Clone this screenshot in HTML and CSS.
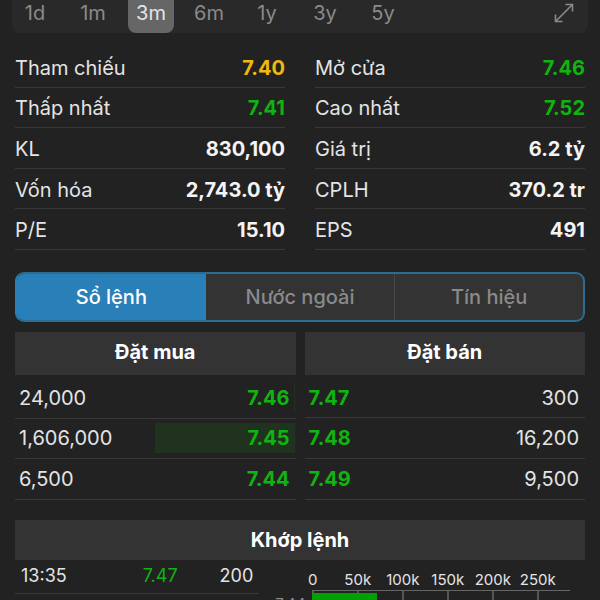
FILE: index.html
```html
<!DOCTYPE html>
<html lang="vi">
<head>
    <meta charset="UTF-8">
    <meta name="viewport" content="width=device-width, initial-scale=1.0">
    <title>Sổ lệnh</title>
    <link rel="stylesheet" href="styles.css">
</head>
<body>
    <nav class="range-bar">
        <button class="range">1d</button>
        <button class="range">1m</button>
        <button class="range active">3m</button>
        <button class="range">6m</button>
        <button class="range">1y</button>
        <button class="range">3y</button>
        <button class="range">5y</button>
        <button class="expand" aria-label="Toàn màn hình">
            <svg width="20" height="20" viewBox="0 0 20 20" fill="none" stroke="currentColor" stroke-width="1.6">
                <path d="M1.5 18.5L18.5 1.5M11.5 1.5h7v7M1.5 11.5v7h7"/>
            </svg>
        </button>
    </nav>

    <main>
        <div class="stats">
            <dl class="stat-list">
                <div class="stat"><dt>Tham chiếu</dt><dd class="yellow">7.40</dd></div>
                <div class="stat"><dt>Thấp nhất</dt><dd class="green">7.41</dd></div>
                <div class="stat"><dt>KL</dt><dd>830,100</dd></div>
                <div class="stat"><dt>Vốn hóa</dt><dd>2,743.0 tỷ</dd></div>
                <div class="stat"><dt>P/E</dt><dd>15.10</dd></div>
            </dl>
            <dl class="stat-list">
                <div class="stat"><dt>Mở cửa</dt><dd class="green">7.46</dd></div>
                <div class="stat"><dt>Cao nhất</dt><dd class="green">7.52</dd></div>
                <div class="stat"><dt>Giá trị</dt><dd>6.2 tỷ</dd></div>
                <div class="stat"><dt>CPLH</dt><dd>370.2 tr</dd></div>
                <div class="stat"><dt>EPS</dt><dd>491</dd></div>
            </dl>
        </div>

        <div class="tabs">
            <button class="tab active">Sổ lệnh</button>
            <button class="tab">Nước ngoài</button>
            <button class="tab">Tín hiệu</button>
        </div>

        <div class="book">
            <section>
                <h2 class="heading">Đặt mua</h2>
                <table class="orders">
                    <tr><td>24,000</td><td class="price"><div class="depth" style="--depth: 1%">7.46</div></td></tr>
                    <tr><td>1,606,000</td><td class="price"><div class="depth" style="--depth: 100%">7.45</div></td></tr>
                    <tr><td>6,500</td><td class="price"><div class="depth" style="--depth: 0%">7.44</div></td></tr>
                </table>
            </section>
            <section>
                <h2 class="heading">Đặt bán</h2>
                <table class="orders sell">
                    <tr><td class="price">7.47</td><td>300</td></tr>
                    <tr><td class="price">7.48</td><td>16,200</td></tr>
                    <tr><td class="price">7.49</td><td>9,500</td></tr>
                </table>
            </section>
        </div>

        <h2 class="heading matched">Khớp lệnh</h2>
        <div class="trades">
            <table class="trade-list">
                <tr><td class="time">13:35</td><td class="green">7.47</td><td class="amount">200</td></tr>
            </table>
            <div class="chart">
                <div class="axis">
                    <span>0</span><span>50k</span><span>100k</span><span>150k</span><span>200k</span><span>250k</span>
                </div>
                <div class="plot-row">
                    <span class="level">7.44</span>
                    <div class="plot">
                        <div class="grid-lines"><i></i><i></i><i></i><i></i><i></i><i></i></div>
                        <div class="volume" style="width: 25%"></div>
                    </div>
                </div>
            </div>
        </div>
    </main>
</body>
</html>
```
FILE: styles.css
```css
* {
    box-sizing: border-box;
}
body {
    margin: 0;
    height: 100vh;
    overflow: hidden;
    background-color: #222222;
    color: #e4e4e4;
    font-family: Inter, "Noto Sans", sans-serif;
    font-size: 20px;
    line-height: 24px;
}
button {
    border: none;
    padding: 0;
    background: none;
    font: inherit;
    color: #8a8a8a;
    cursor: pointer;
}
.green {
    color: #10b410;
}
.yellow {
    color: #efb90f;
}

/* chart range */
.range-bar {
    display: flex;
    gap: 12px;
    height: 33px;
    margin: 0 12px;
    background-color: #292929;
    border-radius: 0 0 8px 8px;
}
.range {
    width: 46px;
    padding-bottom: 7px;
    border-radius: 0 0 8px 8px;
}
.range.active {
    background-color: #666666;
    color: #e4e4e4;
}
.expand {
    display: flex;
    align-items: center;
    margin-left: auto;
    margin-right: 14px;
    padding-bottom: 7px;
}

main {
    padding: 14px 15px 0;
}

/* key figures */
.stats {
    display: grid;
    grid-template-columns: 1fr 1fr;
    gap: 30px;
}
.stat-list {
    display: grid;
    grid-template-rows: repeat(5, 1fr);
    height: 203px;
    margin: 0;
}
.stat {
    display: flex;
    justify-content: space-between;
    align-items: center;
    padding-top: 2px;
    border-bottom: 1px solid #383838;
}
.stat dd {
    margin: 0;
    color: #f4f4f4;
    font-weight: 700;
    font-optical-sizing: none;
}
.stat dd.green {
    color: #10b410;
}
.stat dd.yellow {
    color: #efb90f;
}

.tabs {
    display: grid;
    grid-template-columns: repeat(3, 1fr);
    height: 50px;
    margin-top: 22px;
    border: 2px solid #2c6c90;
    border-radius: 9px;
    background-color: #333333;
    overflow: hidden;
}
.tab {
    font-weight: 500;
}
.tab:last-child {
    border-left: 1px solid #484848;
}
.tab.active {
    background-color: #2980b9;
    color: #ffffff;
}
.tabs:has(.tab.active:first-child) {
    border-left-color: #2980b9;
}

/* order book */
.book {
    display: grid;
    grid-template-columns: 1fr 1fr;
    gap: 9px;
    margin-top: 10px;
}
.heading {
    margin: 0;
    padding: 8px 0 11px;
    background-color: #333333;
    color: #ffffff;
    font-size: 20px;
    font-weight: 700;
    line-height: 24px;
    text-align: center;
}
table {
    width: 100%;
    border-collapse: collapse;
}
.orders {
    height: 122px;
    margin-top: 3px;
}
.orders td {
    width: 50%;
    padding: 0 4px;
    border-bottom: 1px solid #383838;
}
.orders td:last-child {
    text-align: right;
}
.orders .price {
    color: #10b410;
    font-weight: 700;
}
.orders:not(.sell) .price {
    padding: 0;
}
.depth {
    height: 30px;
    padding-right: 6px;
    line-height: 30px;
    background: linear-gradient(#1f331f, #1f331f) right / var(--depth) 100% no-repeat;
}
.orders.sell td:last-child {
    padding-right: 6px;
}

/* matched trades */
.matched {
    margin-top: 20px;
    padding: 8px 0;
}
.trades {
    display: grid;
    grid-template-columns: minmax(0, 3fr) minmax(0, 4fr);
    align-items: start;
}
.trade-list {
    table-layout: fixed;
}
.trade-list td {
    height: 33px;
    padding: 0 6px;
    border-bottom: 1px solid #383838;
    font-size: 18px;
    text-align: right;
}
.trade-list .time {
    text-align: left;
}
.trade-list .green {
    width: 35%;
}
.trade-list .amount {
    width: 31%;
}
.chart {
    padding: 10px 15px 0 16px;
    font-size: 15px;
    line-height: 20px;
}
.axis {
    display: grid;
    grid-template-columns: repeat(6, 45px);
    margin-left: 15px;
    text-align: center;
}
.plot-row {
    display: grid;
    grid-template-columns: 29px minmax(0, 1fr);
    gap: 8px;
}
.level {
    color: #8a8a8a;
    line-height: 28px;
    text-align: right;
}
.plot {
    border-top: 1px solid #666666;
}
.grid-lines {
    display: grid;
    grid-template-columns: repeat(6, 45px);
    height: 2px;
}
.grid-lines i {
    border-left: 2px solid #555555;
    height: 30px;
}
.volume {
    position: relative;
    height: 30px;
    background-color: #00a000;
}
```
